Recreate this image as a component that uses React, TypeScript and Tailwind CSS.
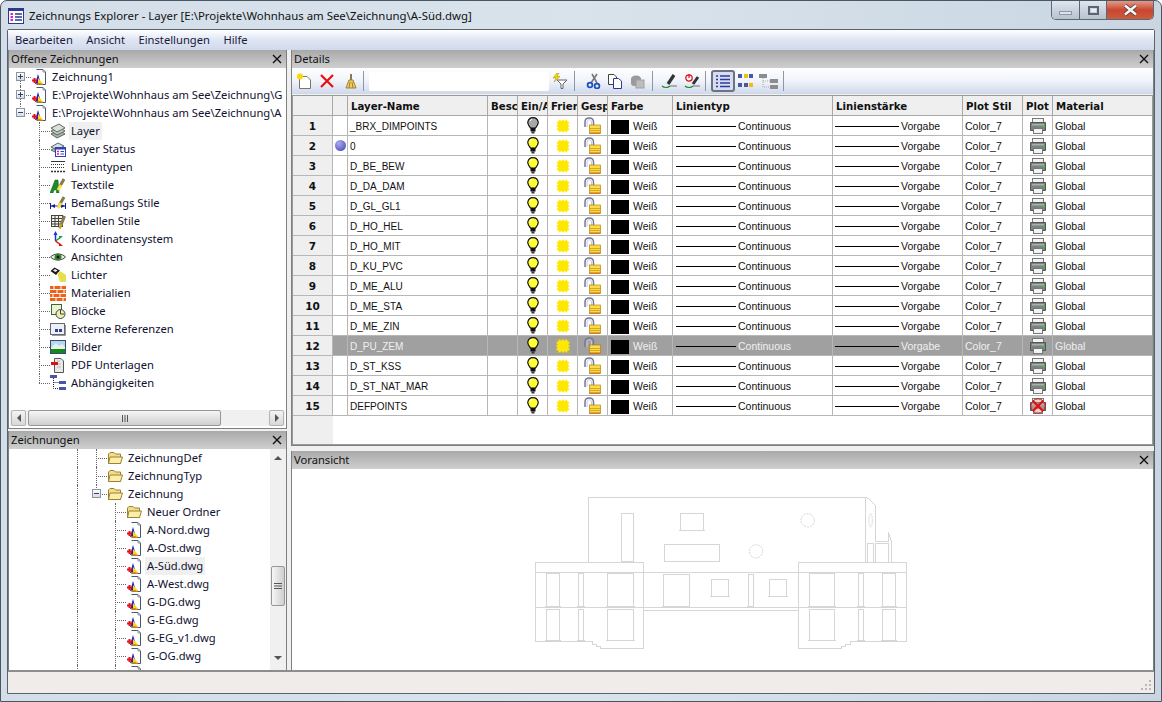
import React from "react";

const D = "border-[#7f7f7f]";

function DwgIcon() {
  return (
    <svg width="16" height="18" viewBox="0 0 16 18" className="shrink-0">
      <path d="M5.5 1.5H12L14.5 4V16.5H5.5" fill="#fff" stroke="#4c5670" />
      <path d="M12 1.5V4H14.5" fill="none" stroke="#8b93a8" />
      <path d="M7 6L10 16H4Z" fill="#2020c8" />
      <path d="M7 10L12 15.5H7Z" fill="#ffd800" />
      <path d="M1 12.5H6M3.5 10V15" stroke="#ee1010" strokeWidth="2" />
      <path d="M5 16H12" stroke="#ffa000" strokeWidth="1.2" />
    </svg>
  );
}

function Folder() {
  return (
    <svg width="16" height="14" viewBox="0 0 16 14" className="shrink-0">
      <path d="M1.5 12.5V3L3 1.5H7L8.5 3H13.5V12.5Z" fill="#f4dd8a" stroke="#9c8230" />
      <path d="M1.5 12.5L3 6H15.5L13.5 12.5Z" fill="#fbedaa" stroke="#9c8230" />
    </svg>
  );
}

const Sv = ({ children, w = 16, h = 16 }: { children: React.ReactNode; w?: number; h?: number }) => (
  <svg width={w} height={h} viewBox={`0 0 ${w} ${h}`} className="shrink-0">
    {children}
  </svg>
);

const Brush = () => (
  <>
    <path d="M9.5 10L14 2" stroke="#8a7a50" strokeWidth="3" />
    <path d="M8 13L11 8" stroke="#ffe040" strokeWidth="3" />
  </>
);

const treeIcons: Record<string, React.ReactNode> = {
  layer: (
    <Sv>
      <path d="M1 11L9 7L15 11L7 15Z" fill="#a9b6ae" stroke="#5b665f" />
      <path d="M1 8L9 4L15 8L7 12Z" fill="#c1ccc4" stroke="#5b665f" />
      <path d="M1 5L9 1L15 5L7 9Z" fill="#d8e2da" stroke="#5b665f" />
    </Sv>
  ),
  status: (
    <Sv>
      <path d="M1 6L8 2L14 5L7 9Z" fill="#d8e2da" stroke="#5b665f" />
      <path d="M1 9L5 7V11Z" fill="#c1ccc4" stroke="#5b665f" />
      <rect x="5.5" y="6.5" width="10" height="9" fill="#fff" stroke="#3040c0" />
      <rect x="5.5" y="6.5" width="10" height="2" fill="#3040c0" />
      <path d="M7 10.5h2M7 13h2" stroke="#d020c0" strokeWidth="1.5" />
      <path d="M10.5 10.5h3.5M10.5 13h3.5" stroke="#3040c0" strokeWidth="1.2" />
    </Sv>
  ),
  lines: (
    <Sv>
      <path d="M1 2.5H15" stroke="#333" />
      <path d="M1 5.5H15" stroke="#333" strokeDasharray="1 1" />
      <path d="M1 8.5H15" stroke="#333" strokeDasharray="1 1" />
      <path d="M1 12.5H15" stroke="#333" strokeDasharray="2 1" strokeWidth="1.5" />
    </Sv>
  ),
  text: (
    <Sv>
      <path d="M0 16L5 3H8L9 16H6.5V13H4L3 16Z" fill="#1c8a2c" stroke="#0e5a18" strokeWidth=".5" />
      <Brush />
    </Sv>
  ),
  dim: (
    <Sv>
      <path d="M0.5 8V14M15.5 8V14" stroke="#1020a0" />
      <path d="M1 11H15" stroke="#1020a0" />
      <path d="M1 11L5 9V13ZM15 11L11 9V13Z" fill="#1020a0" />
      <Brush />
    </Sv>
  ),
  table: (
    <Sv>
      <rect x="1.5" y="2.5" width="11" height="11" fill="#f6f2e4" stroke="#444" />
      <path d="M1.5 5.5H12.5M1.5 8.5H12.5M1.5 11H12.5M5 2.5V13.5M8.5 2.5V13.5" stroke="#444" />
      <path d="M11 12L14.5 3" stroke="#8a7a50" strokeWidth="3" />
      <path d="M9.5 15.5L11.5 11" stroke="#c0a030" strokeWidth="2.5" />
    </Sv>
  ),
  ucs: (
    <Sv>
      <path d="M5.5 10V2" stroke="#2030e0" strokeWidth="1.5" />
      <path d="M5.5 0L3.5 4H7.5Z" fill="#2030e0" />
      <path d="M5.5 10L11 6" stroke="#10a030" strokeWidth="1.5" />
      <path d="M13 5L9 5V8Z" fill="#10a030" />
      <path d="M5.5 10L11 14" stroke="#e01010" strokeWidth="1.5" />
      <path d="M13 15L9 15V12Z" fill="#e01010" />
    </Sv>
  ),
  eye: (
    <Sv>
      <path d="M0.5 8C4 4 12 4 15.5 8C12 12 4 12 0.5 8Z" fill="#e8eee4" stroke="#444" />
      <circle cx="8" cy="8" r="3.5" fill="#3a8030" />
      <circle cx="8" cy="8" r="1.5" fill="#102010" />
    </Sv>
  ),
  light: (
    <Sv>
      <path d="M0.5 4L4.5 0.5L10 3.5L6 8Z" fill="#1a1a1a" />
      <path d="M3 3.5L5 2L7.5 3.5L5.5 5Z" fill="#eee" />
      <path d="M7 6L11 4.5L16 8V15H10Z" fill="#e4e050" />
    </Sv>
  ),
  mat: (
    <Sv>
      <rect x="0" y="1" width="16" height="15" fill="#f06018" />
      <path d="M0 4.5H16M0 8.5H16M0 12.5H16M4 1V4.5M11 1V4.5M7 4.5V8.5M14 4.5V8.5M3 8.5V12.5M10 8.5V12.5M6 12.5V16M13 12.5V16" stroke="#fff" />
    </Sv>
  ),
  block: (
    <Sv>
      <rect x="1.5" y="1.5" width="10" height="10" fill="#eef2d4" stroke="#3a6a30" />
      <circle cx="10.5" cy="11" r="4.5" fill="#eaf0b0" stroke="#444" />
      <path d="M10.5 11V7M10.5 11H14" stroke="#444" />
    </Sv>
  ),
  xref: (
    <Sv>
      <rect x="0.5" y="2.5" width="14" height="11" fill="#eef0f6" stroke="#667" />
      <path d="M15.5 4V14.5H2" stroke="#999" fill="none" />
      <rect x="5" y="8" width="3" height="3" fill="#3040a0" />
      <rect x="9" y="8" width="3" height="3" fill="#3040a0" />
    </Sv>
  ),
  img: (
    <Sv>
      <rect x="0.5" y="1.5" width="15" height="13" fill="#b4d8f0" stroke="#3c4a70" />
      <path d="M1 9L6 4L9 7L12 5L15 8V11H1Z" fill="#e8f0e8" />
      <rect x="1" y="10" width="14" height="4" fill="#128a1a" />
    </Sv>
  ),
  pdf: (
    <Sv>
      <path d="M4.5 1.5H11L13.5 4V15.5H4.5Z" fill="#e8e8e8" stroke="#555" />
      <path d="M7 4H10M7 7H11M7 10H11" stroke="#bbb" />
      <rect x="1" y="5" width="7" height="3" fill="#e01010" />
    </Sv>
  ),
  dep: (
    <Sv>
      <rect x="0" y="0" width="7" height="3" fill="#4a55a8" />
      <rect x="9" y="6" width="7" height="3" fill="#4a55a8" />
      <rect x="9" y="12" width="7" height="3" fill="#4a55a8" />
      <path d="M3.5 3V13.5H9M3.5 7.5H9" stroke="#222" strokeDasharray="1 1" fill="none" />
    </Sv>
  ),
};

function Guide({
  w,
  verts = [],
  branch,
  end,
  start,
  box,
}: {
  w: number;
  verts?: number[];
  branch: number;
  end?: boolean;
  start?: boolean;
  box?: "+" | "-";
}) {
  return (
    <div className="relative h-[18px] shrink-0" style={{ width: w }}>
      {verts.map((v) => (
        <span key={v} className="absolute top-0 h-full border-l border-dotted border-[#666]" style={{ left: v }} />
      ))}
      <span
        className={`absolute border-l border-dotted border-[#666] ${end ? "top-0 h-1/2" : start ? "top-1/2 h-1/2" : "top-0 h-full"}`}
        style={{ left: branch }}
      />
      <span className="absolute top-[9px] right-0 border-t border-dotted border-[#666]" style={{ left: branch }} />
      {box && (
        <span
          className="absolute top-[4px] flex h-[9px] w-[9px] items-center justify-center border border-[#8a94a4] bg-gradient-to-b from-white to-[#d8dce4]"
          style={{ left: branch - 4 }}
        >
          <span className="absolute h-px w-[5px] bg-[#33405e]" />
          {box === "+" && <span className="absolute h-[5px] w-px bg-[#33405e]" />}
        </span>
      )}
    </div>
  );
}

function DockHeader({ title }: { title: string }) {
  return (
    <div className="flex h-[18px] shrink-0 items-center justify-between bg-gradient-to-b from-[#a9a9a9] to-[#cfcfcf] pl-[2px] pr-[4px] text-[#111]">
      <span>{title}</span>
      <svg width="10" height="10" viewBox="0 0 10 10">
        <path d="M1 1L9 9M9 1L1 9" stroke="#111" strokeWidth="1.4" />
      </svg>
    </div>
  );
}

const children: [string, string, boolean?][] = [
  ["Layer", "layer", true],
  ["Layer Status", "status"],
  ["Linientypen", "lines"],
  ["Textstile", "text"],
  ["Bemaßungs Stile", "dim"],
  ["Tabellen Stile", "table"],
  ["Koordinatensystem", "ucs"],
  ["Ansichten", "eye"],
  ["Lichter", "light"],
  ["Materialien", "mat"],
  ["Blöcke", "block"],
  ["Externe Referenzen", "xref"],
  ["Bilder", "img"],
  ["PDF Unterlagen", "pdf"],
  ["Abhängigkeiten", "dep"],
];

function TopTree() {
  const tops: [string, "+" | "-"][] = [
    ["Zeichnung1", "+"],
    ["E:\\Projekte\\Wohnhaus am See\\Zeichnung\\G", "+"],
    ["E:\\Projekte\\Wohnhaus am See\\Zeichnung\\A", "-"],
  ];
  return (
    <div className="flex min-h-0 flex-1 flex-col overflow-hidden whitespace-nowrap">
      {tops.map(([t, b], i) => (
        <div key={t} className="flex h-[18px] items-center">
          <Guide w={22} branch={11} box={b} start={i === 0} end={i === 2} />
          <DwgIcon />
          <span className="ml-[5px]">{t}</span>
        </div>
      ))}
      {children.map(([t, ic, sel], i) => (
        <div key={t} className="flex h-[18px] items-center">
          <Guide w={41} branch={30} end={i === children.length - 1} />
          <span className="flex w-[16px] shrink-0 items-center justify-center">{treeIcons[ic]}</span>
          <span className={`ml-[3px] px-[2px] leading-[18px] ${sel ? "bg-[#f0f0f0]" : ""}`}>{t}</span>
        </div>
      ))}
    </div>
  );
}

function HScroll() {
  const Arrow = ({ d }: { d: string }) => (
    <div className="flex h-[16px] w-[15px] items-center justify-center rounded-[2px] border border-[#b4b4b4] bg-gradient-to-b from-[#f4f4f4] to-[#d8d8d8]">
      <svg width="6" height="8" viewBox="0 0 6 8">
        <path d={d} fill="#555" />
      </svg>
    </div>
  );
  return (
    <div className="mx-[1px] mb-[2px] flex h-[16px] shrink-0 items-center bg-[#f0f0f0] px-[1px]">
      <Arrow d="M5 0V8L1 4Z" />
      <div className="ml-[2px] flex h-[16px] w-[193px] items-center justify-center rounded-[2px] border border-[#979797] bg-gradient-to-b from-[#f6f6f6] to-[#cfcfcf]">
        <svg width="8" height="7" viewBox="0 0 8 7">
          <path d="M1.5 0V7M4 0V7M6.5 0V7" stroke="#555" />
        </svg>
      </div>
      <div className="flex-1" />
      <Arrow d="M1 0V8L5 4Z" />
    </div>
  );
}

function VScroll() {
  return (
    <div className="flex w-[16px] shrink-0 flex-col items-center overflow-hidden bg-[#f0f0f0]">
      <div className="flex h-[16px] items-center justify-center">
        <svg width="8" height="5" viewBox="0 0 8 5">
          <path d="M0 5H8L4 1Z" fill="#555" />
        </svg>
      </div>
      <div className="h-[101px]" />
      <div className="flex h-[40px] w-[14px] items-center justify-center rounded-[2px] border border-[#979797] bg-gradient-to-r from-[#f6f6f6] to-[#cfcfcf]">
        <svg width="8" height="8" viewBox="0 0 8 8">
          <path d="M0 1.5H8M0 4H8M0 6.5H8" stroke="#555" />
        </svg>
      </div>
      <div className="flex-1" />
      <div className="flex h-[16px] items-center justify-center pb-[8px]">
        <svg width="8" height="5" viewBox="0 0 8 5">
          <path d="M0 0H8L4 4Z" fill="#555" />
        </svg>
      </div>
    </div>
  );
}

const dwgs = ["A-Nord.dwg", "A-Ost.dwg", "A-Süd.dwg", "A-West.dwg", "G-DG.dwg", "G-EG.dwg", "G-EG_v1.dwg", "G-OG.dwg", "G-UG.dwg"];

function BottomTree() {
  return (
    <div className="flex min-h-0 flex-1 overflow-hidden whitespace-nowrap">
      <div className="min-w-0 flex-1 overflow-hidden">
        {["ZeichnungDef", "ZeichnungTyp", "Zeichnung"].map((t, i) => (
          <div key={t} className="flex h-[18px] items-center">
            <Guide w={98} verts={[68]} branch={87} box={i === 2 ? "-" : undefined} end={i === 2} />
            <Folder />
            <span className="ml-[5px]">{t}</span>
          </div>
        ))}
        <div className="flex h-[18px] items-center">
          <Guide w={117} verts={[68]} branch={106} />
          <Folder />
          <span className="ml-[5px]">Neuer Ordner</span>
        </div>
        {dwgs.map((t) => (
          <div key={t} className="flex h-[18px] items-center">
            <Guide w={117} verts={[68]} branch={106} />
            <DwgIcon />
            <span className={`ml-[3px] px-[2px] leading-[18px] ${t === "A-Süd.dwg" ? "bg-[#f0f0f0]" : ""}`}>{t}</span>
          </div>
        ))}
      </div>
      <VScroll />
    </div>
  );
}

const Sep = () => <div className="h-[20px] w-px shrink-0 bg-[#8d97a5]" />;

function Toolbar() {
  return (
    <div className="flex h-[26px] shrink-0 items-center bg-gradient-to-b from-white via-[#f0f3fa] to-[#cfd8eb] pl-[4px]">
      <Sv>
        <path d="M3.5 3.5H11L14.5 7V15.5H3.5Z" fill="#fff" stroke="#7a7a60" />
        <circle cx="4" cy="3.5" r="3" fill="#ffd800" />
      </Sv>
      <div className="ml-[7px]">
        <Sv>
          <path d="M2 2L14 14M14 2L2 14" stroke="#e81010" strokeWidth="2.2" />
        </Sv>
      </div>
      <div className="ml-[8px]">
        <Sv>
          <path d="M8 1V7" stroke="#8a7a50" strokeWidth="2" />
          <path d="M6 7H10L13 15H3Z" fill="#f0d060" stroke="#a08030" />
          <path d="M6 15L7 9M9 9L10 15" stroke="#a08030" />
        </Sv>
      </div>
      <div className="ml-[4px] mr-[5px]">
        <Sep />
      </div>
      <div className="h-[19px] w-[180px] shrink-0 rounded-[2px] bg-white" />
      <div className="ml-[3px]">
        <Sv>
          <path d="M5 7H15L11 11V15.5H9V11Z" fill="#fff" stroke="#666" />
          <path d="M5 0L1 5H4L2 9L8 3.5H5L7 0Z" fill="#f0d800" stroke="#a89000" strokeWidth=".5" />
        </Sv>
      </div>
      <div className="ml-[6px] mr-[10px]">
        <Sep />
      </div>
      <Sv>
        <path d="M12 1L6 10M7 1L12 10" stroke="#777" strokeWidth="1.6" />
        <circle cx="5" cy="12" r="2.4" fill="none" stroke="#2050c0" strokeWidth="1.8" />
        <circle cx="12" cy="13" r="2.4" fill="none" stroke="#2050c0" strokeWidth="1.8" />
      </Sv>
      <div className="ml-[6px]">
        <Sv>
          <path d="M1.5 1.5H7L9.5 4V11.5H1.5Z" fill="#fff" stroke="#444" />
          <path d="M6.5 5.5H11.5L14.5 8V15.5H6.5Z" fill="#fff" stroke="#2a3a90" />
        </Sv>
      </div>
      <div className="ml-[6px]">
        <Sv>
          <path d="M2 6C2 2 10 1 12 5V13H5C3 13 2 12 2 10Z" fill="#9a9a9a" />
          <rect x="7" y="7" width="8" height="8" fill="#bdbdbd" stroke="#a0a0a0" />
        </Sv>
      </div>
      <div className="ml-[7px] mr-[7px]">
        <Sep />
      </div>
      <div className="mr-[5px]">
        <Sv w={18}>
          <path d="M8 11L14 2" stroke="#333" strokeWidth="3.2" />
          <path d="M2 13C4 15 8 15 10 13" fill="none" stroke="#1a8a20" strokeWidth="1.2" />
          <path d="M10 13H17" stroke="#999" strokeWidth="1.5" />
        </Sv>
      </div>
      <Sv w={18}>
        <path d="M10 11L15 4" stroke="#333" strokeWidth="3" />
        <circle cx="6" cy="5" r="3.2" fill="none" stroke="#e01010" strokeWidth="1.2" />
        <path d="M6 1V5" stroke="#e01010" strokeWidth="1.2" />
        <path d="M2 13C4 15 8 15 10 13" fill="none" stroke="#1a8a20" strokeWidth="1.2" />
        <path d="M10 13H17" stroke="#999" strokeWidth="1.5" />
      </Sv>
      <div className="ml-[4px] mr-[5px]">
        <Sep />
      </div>
      <div className="flex h-[22px] w-[24px] shrink-0 items-center justify-center rounded-[3px] border-2 border-[#6d7280] bg-[#d7dcef]">
        <Sv>
          <path d="M1 3H3M5 3H15M1 6.5H3M5 6.5H15M1 10H3M5 10H15M1 13.5H3M5 13.5H15" stroke="#2a3aa0" strokeWidth="1.6" />
        </Sv>
      </div>
      <div className="ml-[2px]">
        <Sv>
          <path d="M1 1h4v4h-4zM7 1h4v4h-4zM12 1h4v4h-4zM1 10h4v4h-4zM7 10h4v4h-4zM12 10h4v4h-4z" fill="#4a55a8" />
          <path d="M7 1h4v4h-4zM12 10h4v4h-4z" fill="#ecc010" />
        </Sv>
      </div>
      <div className="ml-[6px]">
        <Sv w={20}>
          <rect x="0" y="1" width="8" height="4" fill="#8c8c8c" />
          <rect x="11" y="6" width="8" height="4" fill="#8c8c8c" />
          <rect x="11" y="12" width="8" height="4" fill="#8c8c8c" />
          <path d="M4 5V14H11M4 8H11" stroke="#aaa" strokeDasharray="1 1" fill="none" />
        </Sv>
      </div>
      <div className="ml-[4px]">
        <Sep />
      </div>
    </div>
  );
}

function Bulb({ on = true }: { on?: boolean }) {
  return (
    <svg width="12" height="17" viewBox="0 0 12 17">
      <path
        d="M3.5 11C1 8 .5 6.5 .8 5C1.4 2 3.5 .7 6 .7S10.6 2 11.2 5C11.5 6.5 11 8 8.5 11Z"
        fill={on ? "#ffff30" : "#a8a8a8"}
        stroke="#111"
        strokeWidth="1.2"
      />
      <path d="M3 4C3.5 3 4 2.6 5 2.4" stroke="#fff" strokeWidth="1" fill="none" />
      <rect x="3.5" y="11" width="5" height="3.5" fill="#111" />
      <rect x="4.5" y="14.5" width="3" height="2" fill="#333" />
    </svg>
  );
}

const SUN_PATH =
  "M" +
  Array.from({ length: 24 }, (_, i) => {
    const a = (i * Math.PI) / 12;
    const c = Math.cos(a);
    const s = Math.sin(a);
    const square = 1 / Math.pow(Math.max(Math.abs(c), Math.abs(s)), 0.7);
    const r = (i % 2 ? 5 : 6.6) * square;
    return `${(7 + r * c).toFixed(2)} ${(7 + r * s).toFixed(2)}`;
  }).join("L") +
  "Z";

function Sun({ sel }: { sel?: boolean }) {
  return (
    <svg width="14" height="14" viewBox="0 0 14 14">
      {sel && <rect x=".5" y=".5" width="13" height="13" fill="none" stroke="#c0b040" />}
      <path d={SUN_PATH} fill="#ffe800" stroke="#fff070" strokeWidth=".4" />
    </svg>
  );
}

function Lock() {
  return (
    <svg width="17" height="17" viewBox="0 0 17 17">
      <path d="M1 10V5C1 -.4 9.5 -.4 9.5 5V8" fill="none" stroke="#77779a" strokeWidth="1.5" />
      <path d="M3 10V5C3 2 7.5 2 7.5 5V8" fill="none" stroke="#c8c8d8" strokeWidth="1" />
      <rect x="5.5" y="8" width="11" height="8.5" fill="#ffdc40" stroke="#a07010" strokeWidth=".6" />
      <path d="M5.5 11.5H16.5M5.5 13.5H16.5" stroke="#c09020" strokeWidth=".7" />
      <path d="M5.5 16H16.5" stroke="#d06000" />
    </svg>
  );
}

function Printer({ off }: { off?: boolean }) {
  return (
    <svg width="16" height="16" viewBox="0 0 16 16">
      <rect x="2.5" y=".5" width="11" height="4" fill="#f4f4f4" stroke="#777" />
      <path d="M.5 4.5H15.5V12.5H.5Z" fill="#7a847c" stroke="#555" />
      <rect x="2" y="6" width="12" height="1.5" fill="#a8b0aa" />
      <rect x="3.5" y="10.5" width="9" height="5" fill="#f4f4f4" stroke="#777" />
      <rect x="13" y="8" width="2" height="1.5" fill="#20d040" />
      {off && (
        <>
          <circle cx="8" cy="8" r="7.2" fill="#e8a0a0" fillOpacity=".45" stroke="#c02020" />
          <path d="M3 3L13 13M13 3L3 13" stroke="#e01010" strokeWidth="2.2" />
        </>
      )}
    </svg>
  );
}

const layers = [
  "_BRX_DIMPOINTS",
  "0",
  "D_BE_BEW",
  "D_DA_DAM",
  "D_GL_GL1",
  "D_HO_HEL",
  "D_HO_MIT",
  "D_KU_PVC",
  "D_ME_ALU",
  "D_ME_STA",
  "D_ME_ZIN",
  "D_PU_ZEM",
  "D_ST_KSS",
  "D_ST_NAT_MAR",
  "DEFPOINTS",
];

const COLS = "grid grid-cols-[40px_15px_140px_30px_30px_30px_30px_65px_160px_130px_60px_30px_100px]";
const CELL = "flex h-[20px] min-w-0 items-center overflow-hidden whitespace-nowrap border-r border-b border-[#b7b7b7]";
const HEAD = "flex h-[20px] min-w-0 items-center overflow-hidden whitespace-nowrap border-r border-b border-[#a8a8a8] bg-[#efefef] pl-[3px] pt-[2px] font-bold text-[#111]";

function Grid() {
  const heads = ["", "", "Layer-Name", "Besc", "Ein/A", "Frier", "Gesp", "Farbe", "Linientyp", "Linienstärke", "Plot Stil", "Plot", "Material"];
  return (
    <div className="mt-[1px] min-h-0 flex-1 overflow-hidden border border-[#9a9a9a] bg-white font-['Liberation_Sans'] text-[10.5px] text-[#111]">
      <div className="flex h-full">
        <div className="flex min-w-0 flex-col">
          <div className={COLS}>
            {heads.map((h, i) => (
              <div key={i} className={HEAD}>
                <span className="font-['DejaVu_Sans'] text-[10.2px]">{h}</span>
              </div>
            ))}
          </div>
          {layers.map((name, i) => {
            const sel = i === 11;
            const c = sel ? "bg-[#a0a0a0] text-[#f0f0f0]" : "";
            return (
              <div key={name} className={COLS}>
                <div className={`${CELL} justify-center bg-[#efefef] pt-[2px] font-['DejaVu_Sans'] font-bold text-[#111]`}>{i + 1}</div>
                <div className={`${CELL} ${c} justify-center`}>
                  {i === 1 && <span className="h-[11px] w-[11px] rounded-full bg-[radial-gradient(circle_at_35%_30%,#a9a9f0,#4040b0)]" />}
                </div>
                <div className={`${CELL} ${c} pl-[2px] pt-[2px] text-[10px]`}>{name}</div>
                <div className={`${CELL} ${c}`} />
                <div className={`${CELL} ${c} justify-center`}>
                  <Bulb on={i !== 0} />
                </div>
                <div className={`${CELL} ${c} justify-center`}>
                  <Sun sel={sel} />
                </div>
                <div className={`${CELL} ${c} justify-center`}>
                  <Lock />
                </div>
                <div className={`${CELL} ${c} pl-[3px] pt-[2px]`}>
                  <span className="h-[14px] w-[18px] shrink-0 bg-black" />
                  <span className="ml-[4px]">Weiß</span>
                </div>
                <div className={`${CELL} ${c} pl-[3px] pt-[2px]`}>
                  <span className="h-px w-[60px] shrink-0 bg-black" />
                  <span className="ml-[2px]">Continuous</span>
                </div>
                <div className={`${CELL} ${c} pl-[2px] pt-[2px]`}>
                  <span className="h-px w-[64px] shrink-0 bg-black" />
                  <span className="ml-[2px]">Vorgabe</span>
                </div>
                <div className={`${CELL} ${c} pl-[2px] pt-[2px]`}>Color_7</div>
                <div className={`${CELL} ${c} justify-center`}>
                  <Printer off={i === 14} />
                </div>
                <div className={`${CELL} ${c} pl-[2px] pt-[2px]`}>Global</div>
              </div>
            );
          })}
          <div className="min-h-0 flex-1">
            <div className="h-full w-[40px] bg-[#efefef]" />
          </div>
        </div>
      </div>
    </div>
  );
}

function Building() {
  const base = (x1: number, x2: number, y: number) => `M${x1} ${y}H${x2}`;
  const win = (x1: number, x2: number, y1: number, y2: number) => `M${x1} ${y2}V${y1}H${x2}V${y2}H${x1}`;
  const cols: [number, number][] = [
    [79, 119],
    [175, 191],
    [262, 341],
    [868, 944],
    [1015, 1031],
    [1087, 1127],
  ];
  return (
    <svg width="400" height="160" viewBox="0 0 1200 480" className="block" shapeRendering="crispEdges">
      <g fill="none" stroke="#d6d6d6" strokeWidth="3">
        <path d="M205 216V22H1036V216M1036 22L1048 28L1066 46V155H1105V126L1113 150V216" />
        <path d={win(304, 341, 70, 214)} />
        <path d={win(481, 551, 70, 120)} />
        <path d={base(477, 555, 120)} />
        <path d={win(433, 597, 163, 214)} />
        <path d={win(1042, 1061, 160, 216)} />
        <path d={win(1066, 1106, 160, 216)} />
        <path d="M46 216H371V475H241V470H230V462H217V454H46Z" />
        <path d="M835 216H1160V454H990V462H977V470H965V475H835Z" />
        <path d="M46 247H1160M46 352H1160M371 361H835" />
        {cols.map(([a, b]) => (
          <path key={a} d={win(a, b, 250, 350) + win(a, b, 358, 452) + base(a - 4, b + 4, 349) + base(a - 4, b + 4, 452)} />
        ))}
        <path d={win(430, 509, 253, 350) + base(426, 511, 349)} />
        <path d={win(574, 626, 268, 318) + base(570, 630, 318)} />
        <path d={win(685, 701, 253, 350) + base(681, 703, 349)} />
        <path d={win(748, 800, 268, 318) + base(744, 804, 318)} />
      </g>
      <g fill="none" stroke="#d6d6d6" strokeWidth="3" strokeDasharray="6 3" shapeRendering="auto">
        <circle cx="863" cy="91" r="20" />
        <circle cx="708" cy="184" r="20" />
        <ellipse cx="1052" cy="91" rx="5" ry="20" />
      </g>
    </svg>
  );
}

export default function App() {
  return (
    <div className="flex h-[702px] w-[1162px] flex-col overflow-hidden rounded-t-[7px] border border-[#4b5663] bg-gradient-to-r from-[#d3dee9] via-[#d9e3ec] to-[#c9d6e2] font-['Noto_Sans',sans-serif] text-[11.2px] text-[#101030]">
      <div className="flex h-[28px] shrink-0 items-start">
        <div className="ml-[7px] mt-[7px]">
          <svg width="16" height="16" viewBox="0 0 16 16">
            <rect x=".5" y=".5" width="15" height="15" fill="#fff" stroke="#2a3a90" />
            <rect x=".5" y=".5" width="15" height="2.5" fill="#2a3a90" />
            <path d="M2.5 6H5M2.5 9H5M2.5 12H5" stroke="#e020d0" strokeWidth="1.8" />
            <path d="M7 6H14M7 9H14M7 12H14" stroke="#2a3a90" strokeWidth="1.4" />
          </svg>
        </div>
        <span className="ml-[5px] mt-[6px] text-[11.4px] leading-[18px] text-[#111]">Zeichnungs Explorer - Layer [E:\Projekte\Wohnhaus am See\Zeichnung\A-Süd.dwg]</span>
        <div className="ml-auto mr-[7px] flex h-[19px] overflow-hidden rounded-b-[5px] border border-t-0 border-[#5d6875]">
          <div className="flex w-[28px] items-center justify-center border-r border-[#5d6875] bg-gradient-to-b from-[#dfe6ee] to-[#b6c2cf]">
            <span className="mt-[5px] h-[4px] w-[13px] border border-[#8b97a5] bg-[#dde3ea]" />
          </div>
          <div className="flex w-[27px] items-center justify-center border-r border-[#5d6875] bg-gradient-to-b from-[#dfe6ee] to-[#b6c2cf]">
            <span className="flex h-[9px] w-[11px] items-center justify-center border-2 border-[#5a6472]">
              <span className="h-[3px] w-[5px] bg-[#e6ecf2]" />
            </span>
          </div>
          <div className="flex w-[46px] items-center justify-center bg-gradient-to-b from-[#e09a88] via-[#c9452e] to-[#c95c40]">
            <svg width="15" height="12" viewBox="0 0 15 12">
              <path d="M2 1.5L13 10.5M13 1.5L2 10.5" stroke="#4a3530" strokeWidth="4" />
              <path d="M2 1.5L13 10.5M13 1.5L2 10.5" stroke="#f8f8f8" strokeWidth="2.6" />
            </svg>
          </div>
        </div>
      </div>
      <div className="mx-[6px] mb-[7px] flex min-h-0 flex-1 flex-col rounded-t-[2px] border border-[#59636f] bg-[#f0f0f0]">
        <div className="flex h-[20px] shrink-0 items-center gap-[13.5px] bg-gradient-to-b from-white via-[#dfe5f3] to-[#d0d9ec] pl-[7px] text-[#1a1a3a]">
          <span>Bearbeiten</span>
          <span>Ansicht</span>
          <span>Einstellungen</span>
          <span>Hilfe</span>
        </div>
        <div className="flex min-h-0 flex-1 gap-[4px]">
          <div className="flex w-[279px] shrink-0 flex-col gap-[2px]">
            <div className={`flex h-[379px] flex-col border-x border-b ${D} bg-white`}>
              <DockHeader title="Offene Zeichnungen" />
              <TopTree />
              <HScroll />
            </div>
            <div className={`flex min-h-0 flex-1 flex-col border-x ${D} bg-white`}>
              <DockHeader title="Zeichnungen" />
              <BottomTree />
            </div>
          </div>
          <div className="flex min-w-0 flex-1 flex-col gap-[5px]">
            <div className={`flex h-[396px] flex-col border-x border-b ${D} bg-[#f0f0f0]`}>
              <DockHeader title="Details" />
              <Toolbar />
              <Grid />
            </div>
            <div className={`flex min-h-0 flex-1 flex-col border-x ${D} bg-white`}>
              <DockHeader title="Voransicht" />
              <div className="min-h-0 flex-1 pl-[228px] pt-[21px]">
                <Building />
              </div>
            </div>
          </div>
        </div>
        <div className="flex h-[23px] shrink-0 items-end justify-end border-t-2 border-[#8d8d8d] bg-[#efecea] pb-[2px] pr-[2px]">
          <svg width="11" height="11" viewBox="0 0 11 11">
            <path d="M8 0h2v2H8zM8 4h2v2H8zM4 4h2v2H4zM8 8h2v2H8zM4 8h2v2H4zM0 8h2v2H0z" fill="#b8b8b8" />
          </svg>
        </div>
      </div>
    </div>
  );
}
